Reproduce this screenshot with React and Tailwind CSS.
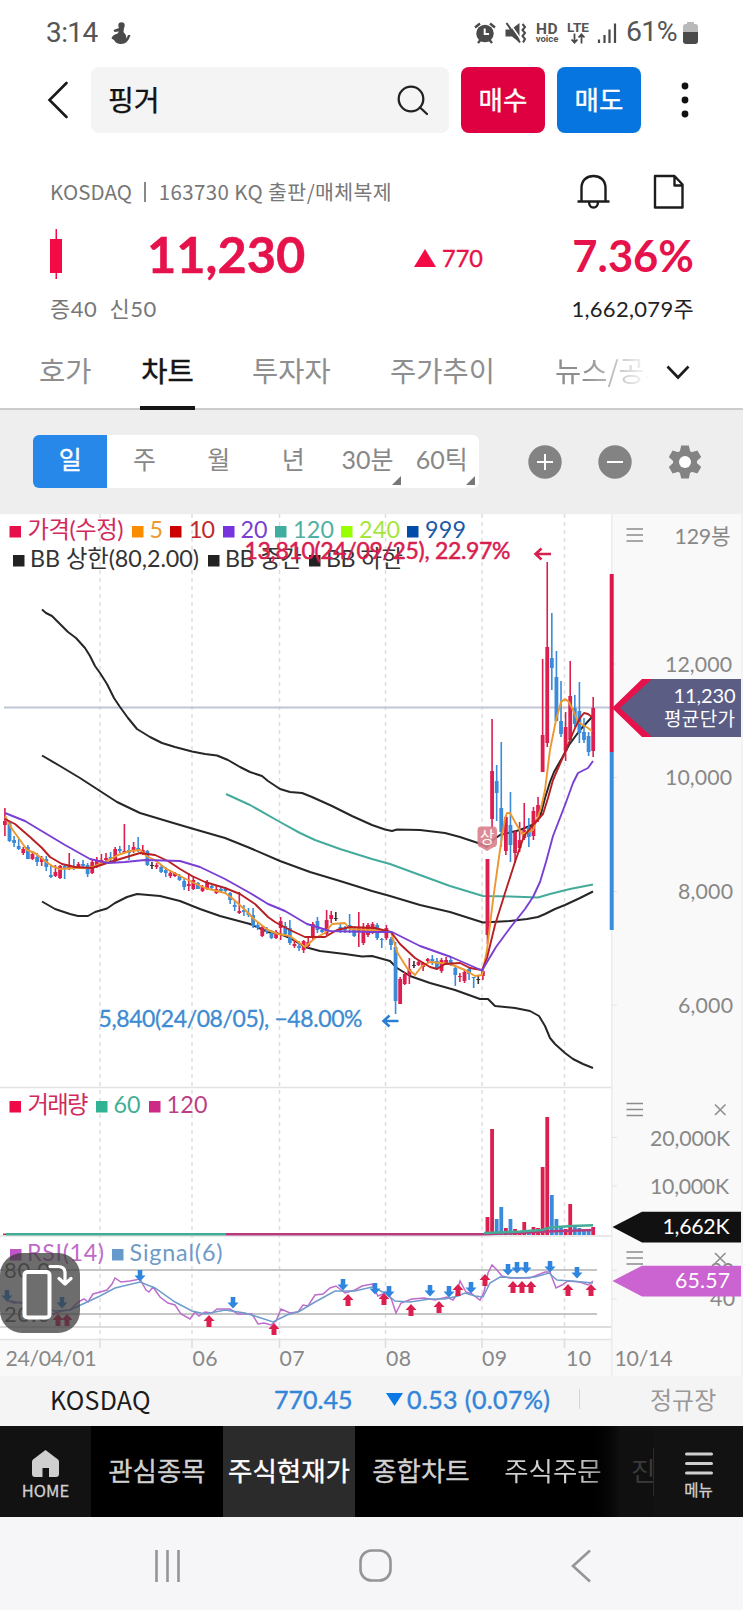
import { clsx } from 'clsx';

const KR = '"Noto Sans CJK KR", sans-serif';
const NUM = 'Lato, "Noto Sans CJK KR", sans-serif';

const RED = '#dc1f4f';
const BLUE = '#3b8bd8';

/* ---------- chart data (plot pixels, y measured from the page top) ---------- */

const barX = (i) => 4.9 + 4.596 * i;

// [high, low, bodyTop, bodyBottom, colour]
const CANDLES = [
  [808, 836, 821, 825, 'r'], [822, 842, 823, 841, 'b'], [836, 847, 840, 843, 'b'], [839, 850, 846, 849, 'b'],
  [847, 855, 849, 853, 'r'], [845, 859, 847, 859, 'b'], [851, 860, 854, 859, 'r'], [853, 866, 857, 862, 'b'],
  [856, 866, 858, 862, 'r'], [856, 871, 859, 867, 'b'], [865, 878, 875, 877, 'b'], [865, 877, 872, 876, 'r'],
  [865, 879, 866, 878, 'r'], [865, 879, 866, 868, 'b'], [853, 870, 866, 869, 'r'], [859, 870, 866, 869, 'b'],
  [862, 869, 864, 868, 'r'], [860, 868, 864, 866, 'b'], [863, 877, 865, 874, 'b'], [860, 874, 862, 873, 'r'],
  [857, 868, 861, 866, 'r'], [854, 865, 860, 863, 'r'], [853, 862, 858, 860, 'r'], [852, 862, 857, 859, 'b'],
  [847, 862, 849, 861, 'r'], [846, 853, 849, 851, 'b'], [824, 853, 851, 853, 'r'], [845, 860, 850, 853, 'b'],
  [842, 853, 847, 851, 'r'], [837, 852, 848, 851, 'b'], [845, 855, 850, 853, 'r'], [850, 866, 851, 865, 'b'],
  [862, 869, 865, 866, 'k'], [863, 869, 865, 867, 'r'], [865, 873, 867, 872, 'b'], [867, 877, 870, 873, 'b'],
  [870, 878, 873, 876, 'r'], [872, 877, 873, 876, 'r'], [874, 881, 876, 880, 'b'], [878, 890, 881, 887, 'b'],
  [873, 891, 884, 886, 'r'], [877, 890, 880, 889, 'r'], [882, 889, 883, 889, 'b'], [885, 892, 887, 891, 'r'],
  [880, 890, 883, 889, 'r'], [885, 890, 886, 888, 'b'], [886, 894, 889, 893, 'r'], [887, 892, 889, 891, 'b'],
  [887, 893, 889, 891, 'b'], [892, 904, 893, 900, 'b'], [900, 911, 905, 907, 'b'], [892, 914, 911, 913, 'r'],
  [905, 916, 910, 912, 'b'], [908, 917, 913, 915, 'b'], [908, 928, 915, 926, 'b'], [923, 930, 925, 928, 'b'],
  [926, 937, 927, 936, 'r'], [927, 934, 929, 932, 'b'], [930, 939, 933, 938, 'b'], [930, 939, 932, 938, 'r'],
  [917, 940, 921, 928, 'r'], [922, 935, 926, 934, 'b'], [920, 945, 928, 943, 'b'], [940, 948, 944, 946, 'r'],
  [941, 951, 946, 948, 'b'], [940, 953, 941, 950, 'r'], [937, 948, 942, 946, 'r'], [922, 940, 924, 937, 'r'],
  [917, 933, 921, 930, 'b'], [928, 933, 930, 932, 'b'], [910, 935, 920, 934, 'r'], [911, 923, 915, 919, 'r'],
  [912, 921, 918, 919, 'k'], [923, 933, 927, 929, 'b'], [926, 933, 928, 930, 'b'], [914, 933, 925, 927, 'b'],
  [928, 937, 929, 936, 'b'], [912, 947, 927, 932, 'r'], [923, 945, 928, 943, 'r'], [923, 937, 925, 935, 'r'],
  [922, 934, 924, 931, 'r'], [923, 940, 925, 938, 'b'], [938, 948, 939, 940, 'b'], [925, 940, 928, 938, 'r'],
  [937, 950, 939, 945, 'b'], [942, 1014, 947, 1001, 'b'], [977, 1004, 979, 1004, 'r'], [972, 985, 974, 984, 'r'],
  [958, 984, 969, 975, 'r'], [961, 968, 965, 966, 'k'], [960, 966, 962, 965, 'r'], [962, 971, 963, 967, 'r'],
  [958, 963, 959, 961, 'r'], [955, 965, 959, 962, 'b'], [958, 970, 961, 969, 'b'], [958, 973, 960, 971, 'r'],
  [957, 965, 960, 963, 'r'], [957, 966, 960, 964, 'b'], [965, 986, 968, 975, 'b'], [973, 982, 976, 977, 'r'],
  [970, 983, 972, 981, 'r'], [967, 980, 969, 974, 'b'], [977, 988, 977, 978, 'b'], [976, 984, 979, 980, 'k'],
  [970, 980, 971, 976, 'r'], [859, 944, 859, 935, 'r'], [719, 828, 771, 819, 'r'], [765, 821, 781, 793, 'b'],
  [742, 847, 808, 832, 'b'], [815, 855, 817, 851, 'r'], [792, 862, 825, 845, 'b'], [830, 863, 832, 853, 'r'],
  [822, 852, 840, 848, 'r'], [803, 840, 830, 838, 'r'], [818, 847, 827, 837, 'b'], [807, 840, 811, 836, 'r'],
  [797, 822, 805, 817, 'r'], [659, 772, 735, 772, 'r'], [562, 747, 647, 743, 'r'], [613, 690, 658, 668, 'b'],
  [651, 721, 677, 721, 'b'], [681, 737, 721, 734, 'b'], [712, 761, 727, 751, 'r'], [661, 740, 696, 740, 'r'],
  [695, 727, 708, 724, 'b'], [682, 743, 711, 733, 'b'], [718, 743, 732, 740, 'b'], [732, 756, 736, 752, 'b'],
  [697, 757, 708, 751, 'r'],
];

// top of the volume bars, starting with bar 105
const VOLUMES = [
  1217, 1129, 1219, 1207, 1228, 1219, 1229, 1231, 1222, 1230, 1227, 1228,
  1167, 1117, 1195, 1219, 1226, 1229, 1204, 1227, 1228, 1231, 1231, 1227,
];

const LINES = {
  bbUpper: '42,609.5 46,613 52,616 60,624 68,632 76,638 85,648 90,656 95,666 100,673 107,684 114,698 120,707 128,718 137,729 150,737 162,743 175,747 192,751.5 205,754 217,755.5 228,760 240,767 250,772 262,776 268,781 280,789 290,792 302,793 312,797 332,806 352,816 372,825 385,829.5 392,831 397,829.5 420,830 445,833 460,837 478,843 487,847 493,840 500,835 520,830 532,825 540,817 545,798 550,782 554,772 562,758 569,745 580,730 592,717',
  bbMid: '42,755.5 60,766 80,778 100,791 117,802 140,813 170,822 192,828.5 225,838 250,848 280,861 310,872 340,881 372,891 390,896 420,905 450,912 483,922.5 510,921 527,919 538,917 545,914 555,909 565,905 580,898 593,891.5',
  bbLower: '42,901.5 55,909 70,914 78,916 88,916 95,912 107,908.5 115,903 127,897 137,894 160,896 180,901 200,909 220,916 250,924 268,932 280,934 290,938 305,947 320,951 345,954 362,956.5 372,956 390,961 397,968 410,976 430,983 455,990 480,999 488,999 495,1006 515,1008 530,1011 539,1016 545,1026 550,1038 555,1044 565,1053 573,1059 583,1064 593,1068',
  ma120: '226,794 250,805 280,822 300,833 315,840 340,849 372,859 390,864 420,875 450,886 483,896 510,896.5 538,897.5 550,894 570,889 593,884.5',
  ma20: '5,813 25,821 45,833 65,845 90,859 108,863 125,862 145,860 180,861 200,867 225,879 250,893 268,904 285,911 307,924 330,931 372,932 392,932 420,946 451,957 482,970.5 496,947 510,928 525,909 533,897 540,882 546,862 553,836 565,805 573,783 578,773 588,768 593,761',
  ma10: '5,819 15,824 30,837 42,848 50,857 62,864 75,867 92,868 110,862 130,856 140,853 155,855 168,861 180,869 192,876 205,882 225,888 240,894 255,904 268,917 275,922 290,930 305,937 325,937 337,930 350,927 375,928 391,932 400,944 415,958 430,967 437,969 445,964 460,963 470,968 482,970 487,958 495,925 505,893 515,862 524,836 534,824 543,814 548,798 553,780 563,757 570,740 575,728 580,718 584,713 588,714 592,717',
  ma5: '5,816 12,829 20,840 27,850 35,853 45,861 52,866 60,869 75,868 90,868 105,862 118,855 130,851 140,850 148,857 155,860 165,868 180,876 192,882 205,888 225,893 232,898 243,908 255,920 268,930 278,934 290,936 305,947 315,938 325,933 332,924 345,923 350,929 372,930 391,932 397,952 407,968 415,975 422,966 430,962 450,964 465,970 475,976 482,975 487,950 493,900 500,850 505,818 507,813 510,813 515,822 522,834 533,830 541,808 545,790 550,750 556,720 561,702 565,699 569,702 573,710 578,722 588,728 592,731',
  rsi: '6,1300 14,1303 24,1302 34,1307 44,1312 50,1315 62,1311 70,1310 78,1302 84,1299 88,1302 93,1294 100,1292 107,1290 112,1284 115,1278 121,1282 130,1281 140,1279 146,1290 149,1292 153,1287 160,1297 168,1303 175,1305 181,1314 190,1319 195,1312 199,1316 205,1312 212,1313 217,1309 230,1309 238,1314 252,1314 258,1324 264,1323 271,1325 276,1321 281,1309 290,1313 298,1312 303,1305 308,1306 315,1295 323,1294 330,1288 336,1286 345,1293 355,1290 362,1286 372,1284 378,1296 388,1292 392,1301 396,1313 401,1303 412,1299 424,1298 435,1300 447,1297 453,1300 456,1296 460,1281 466,1292 472,1294 480,1300 484,1292 488,1273 492,1265 497,1270 502,1276 510,1278 530,1278 545,1272 550,1272 556,1288 562,1285 568,1281 580,1282 588,1285 593,1281',
  signal: '6,1300 30,1305 55,1311 70,1310 85,1303 100,1296 115,1288 140,1282 155,1288 175,1302 192,1311 205,1314 225,1310 245,1313 258,1317 273,1322 287,1315 300,1311 315,1302 335,1291 355,1291 372,1287 385,1293 395,1301 410,1302 430,1299 445,1299 458,1296 465,1293 475,1296 483,1297 490,1283 500,1277 520,1278 535,1277 549,1273 557,1280 572,1281 593,1283',
};

const DOWN_ARROWS = [
  [7, 1290], [62, 1297], [140, 1270], [233, 1297], [343, 1279], [375, 1283], [389, 1286], [430, 1285],
  [449, 1286], [471, 1282], [508, 1264], [517, 1262], [526, 1262], [550, 1261], [577, 1267],
];
const UP_ARROWS = [
  [58, 1314], [67, 1314], [209, 1315], [274, 1323], [348, 1294], [384, 1293], [411, 1304], [439, 1301],
  [458, 1284], [485, 1274], [513, 1281], [522, 1281], [531, 1281], [568, 1284], [591, 1284],
];

const LEGEND = [
  // square x, square y, square colour, text x, baseline, text width, text, text colour
  [9.5, 526, '#e8104a', 27.5, 538, 96, '가격(수정)', '#d02a5c'],
  [132, 526, '#fb8c00', 149.5, 538, 13, '5', '#eb9a2b'],
  [170, 526, '#cc0000', 189, 538, 26, '10', '#c02a2a'],
  [223, 526, '#7733dd', 240.5, 538, 27, '20', '#7b3fd0'],
  [275, 526, '#3fae9e', 293, 538, 41, '120', '#4fb0a2'],
  [341, 526, '#99ff00', 359, 538, 41, '240', '#a5e63a'],
  [407, 526, '#004ca8', 425, 538, 41, '999', '#2059a8'],
  [13, 555, '#222222', 30, 567, 169, 'BB 상한(80,2.00)', '#333333'],
  [208, 555, '#222222', 225, 567, 77, 'BB 중간', '#333333'],
  [309, 555, '#222222', 326, 567, 77, 'BB 하한', '#333333'],
  [9.5, 1101, '#f00a45', 27.5, 1112.5, 61, '거래량', '#d02a5c'],
  [96, 1101, '#2fb394', 113.5, 1112.5, 27, '60', '#3fb094'],
  [149, 1101, '#cc2a85', 166.5, 1112.5, 41, '120', '#bd3f87'],
  [10, 1249, '#bf55c8', 27, 1261, 77, 'RSI(14)', '#c06ac8'],
  [112, 1249, '#6699cc', 129.5, 1261, 93, 'Signal(6)', '#6d9ac6'],
];

const candleColor = { r: RED, b: BLUE, k: '#333333' };

function Label({ x, y, w, size = 21.3, color = '#888888', children, ...rest }) {
  return (
    <text x={x} y={y} textLength={w} fontSize={size} fill={color} style={{ fontFamily: NUM }} {...rest}>
      {children}
    </text>
  );
}

function PaneMenu({ y, close }) {
  return (
    <g stroke="#8c8c8c" strokeWidth="1.500">
      <path d={`M626.5 ${y - 6}H643M626.5 ${y}H643M626.5 ${y + 6}H643`} />
      {close && <path d={`M715 ${y - 5}L725.5 ${y + 5.5}M725.5 ${y - 5}L715 ${y + 5.5}`} />}
    </g>
  );
}

function StockChart() {
  return (
    <svg className="block w-full h-[862px]" viewBox="0 514 743 862" fill="none">
      <rect x="0" y="514" width="743" height="862" fill="#f9f9f9" />
      <rect x="0" y="514.500" width="611.500" height="825" fill="#ffffff" />
      <rect x="611" y="514" width="1.500" height="862" fill="#ececec" />
      <rect x="741" y="514" width="2" height="862" fill="#f2f2f2" />

      {/* month grid */}
      {[100, 192, 279.5, 385.5, 482, 564.5].map((x) => (
        <g key={x}>
          <path d={`M${x} 514V1340`} stroke="#dedede" strokeWidth="1.500" strokeDasharray="4 4" />
          <path d={`M${x} 1340V1348`} stroke="#dddddd" strokeWidth="1.500" />
        </g>
      ))}
      <path d="M0 1087.500H611M0 1236H611M0 1339.500H611" stroke="#e2e2e2" strokeWidth="1.500" />
      <path d="M0 1327H611" stroke="#d2d2d2" strokeWidth="1.500" />
      <path d="M0 1270H597M0 1314H597" stroke="#b4b4b4" strokeWidth="1.500" />
      <path d="M612 664H617M612 777.500H617M612 891.500H617M612 1005H617M612 1137.500H617M612 1186H617M612 1270H617M612 1299H617" stroke="#e4e4e4" />

      {/* legends */}
      {LEGEND.map(([sx, sy, sc, tx, ty, w, text, tc]) => (
        <g key={`${sx}-${sy}`}>
          <rect x={sx} y={sy} width="11.500" height="11.500" fill={sc} />
          <Label x={tx} y={ty} w={w} size={23.3} color={tc}>{text}</Label>
        </g>
      ))}

      <path d="M4 707.500H611" stroke="#c2c5d6" strokeWidth="2" />

      {/* price pane */}
      <g strokeWidth="2" strokeLinejoin="round">
        <polyline points={LINES.bbUpper} stroke="#262626" />
        <polyline points={LINES.bbMid} stroke="#262626" />
        <polyline points={LINES.bbLower} stroke="#262626" />
        <polyline points={LINES.ma120} stroke="#44ab9c" />
      </g>
      {CANDLES.map(([high, low, top, bottom, c], i) => (
        <g key={i} fill={candleColor[c]}>
          <rect x={barX(i) - 0.8} y={high} width="1.600" height={low - high} />
          <rect x={barX(i) - 1.9} y={top} width="3.800" height={bottom - top} />
        </g>
      ))}
      <g strokeWidth="1.900" strokeLinejoin="round">
        <polyline points={LINES.ma5} stroke="#ec9830" />
        <polyline points={LINES.ma10} stroke="#b81f22" />
        <polyline points={LINES.ma20} stroke="#7a3fd2" />
      </g>
      <path d="M481 826.500H493Q497 826.500 497 830.500V843Q497 847 493 847.500L487 851L481 847.500Q477.500 847 477.500 843V830.500Q477.500 826.500 481 826.500Z" fill="#d9808a" fillOpacity="0.900" />
      <Label x={480} y={842.5} w={14.5} size={15.5} color="#ffffff">상</Label>

      <Label x={244.5} y={559} w={266} size={23} color="#d8204f" stroke="#d8204f" strokeWidth="0.500">
        13,810(24/09/25), 22.97%
      </Label>
      <path d="M551 554H536M541.500 548.500L535.500 554L541.500 559.500" stroke="#d8204f" strokeWidth="2.600" />
      <Label x={98.5} y={1026.5} w={264} size={23} color="#3d8bd2" stroke="#3d8bd2" strokeWidth="0.300">
        5,840(24/08/05), −48.00%
      </Label>
      <path d="M398.500 1021H384M389.500 1015.500L383.500 1021L389.500 1026.500" stroke="#2a7fd4" strokeWidth="2.600" />

      {/* volume pane */}
      {VOLUMES.map((top, n) => (
        <rect key={n} x={barX(105 + n) - 1.9} y={top} width="3.800" height={1235 - top} fill={candleColor[CANDLES[105 + n][4]]} />
      ))}
      <path d="M3 1234.300H7" stroke="#b02a55" strokeWidth="1.500" />
      <path d="M6 1234.200H226" stroke="#44ab96" strokeWidth="2.500" />
      <path d="M226 1234.200H484L520 1233L545 1231.500L593 1230" stroke="#b93a7c" strokeWidth="2.500" />
      <path d="M484 1233L520 1231.500L542 1230L550 1227.500L572 1226L593 1225.300" stroke="#44ab96" strokeWidth="2.500" />

      {/* rsi pane */}
      <polyline points={LINES.rsi} stroke="#bd6ccb" strokeWidth="1.500" />
      <polyline points={LINES.signal} stroke="#6f9ccc" strokeWidth="1.500" />
      {DOWN_ARROWS.map(([x, y]) => (
        <path key={`d${x}`} d={`M${x - 2.3} ${y}h4.600v5.500h3.200l-5.500 6l-5.500 -6h3.200z`} fill="#2f86e0" />
      ))}
      {UP_ARROWS.map(([x, y]) => (
        <path key={`u${x}`} d={`M${x - 2.5} ${y + 12}h5v-6h3l-5.500 -6l-5.500 6h3z`} fill={RED} />
      ))}
      <Label x={4} y={1278} w={46} size={22} color="#666666">80.0</Label>
      <Label x={4} y={1321.5} w={46} size={22} color="#666666">20.0</Label>

      {/* value axis */}
      <Label x={674.5} y={543.5} w={56}>129봉</Label>
      <Label x={665} y={671.5} w={67}>12,000</Label>
      <Label x={665} y={785} w={67}>10,000</Label>
      <Label x={678} y={899} w={55}>8,000</Label>
      <Label x={678} y={1012.5} w={55}>6,000</Label>
      <Label x={650} y={1145.5} w={80}>20,000K</Label>
      <Label x={650} y={1194} w={79}>10,000K</Label>
      <Label x={710} y={1278} w={24}>80</Label>
      <Label x={710} y={1306} w={25}>40</Label>
      <PaneMenu y={535} />
      <PaneMenu y={1109.5} close />
      <PaneMenu y={1258} close />

      <rect x="609.700" y="574" width="4" height="178" fill="#e0154b" />
      <rect x="609.700" y="752" width="4" height="178" fill="#3a8ee0" />
      <path d="M612 708L642 679H653V737H642Z" fill="#e6124b" />
      <path d="M620 708L652 679H741V737H652Z" fill="#5b5d85" />
      <Label x={673.5} y={702.5} w={62} size={20} color="#ffffff">11,230</Label>
      <Label x={664} y={725.5} w={71} size={19} color="#ffffff">평균단가</Label>

      <path d="M612.500 1227L642 1211.700H741V1242.500H642Z" fill="#111111" />
      <Label x={662.5} y={1234} w={67} size={21.3} color="#ffffff">1,662K</Label>
      <path d="M612.500 1281L642 1265.700H741V1296.500H642Z" fill="#cb63d1" />
      <Label x={675} y={1288} w={55} size={21.3} color="#ffffff">65.57</Label>

      {/* date axis */}
      <Label x={5.5} y={1365.5} w={91}>24/04/01</Label>
      <Label x={192.5} y={1365.5} w={25}>06</Label>
      <Label x={279.5} y={1365.5} w={25}>07</Label>
      <Label x={386} y={1365.5} w={25}>08</Label>
      <Label x={482} y={1365.5} w={25}>09</Label>
      <Label x={566} y={1365.5} w={25}>10</Label>
      <Label x={614.5} y={1365.5} w={58}>10/14</Label>
    </svg>
  );
}

function RotateButton() {
  return (
    <button type="button" className="absolute left-0 top-[739px] size-20 rounded-[22px] bg-[#3c3c3c]/75">
      <svg className="block" width="80" height="80" viewBox="0 0 80 80" fill="none" stroke="#ffffff" strokeWidth="3.200" strokeLinecap="round" strokeLinejoin="round">
        <rect x="24.500" y="19" width="25" height="45.500" rx="3" fill="#6e6e6e" strokeWidth="4" />
        <path d="M50 13.500H58Q65 13.500 65 20V29M59 25.500L65 31L71 25.500" />
      </svg>
    </button>
  );
}

function StatusBar() {
  return (
    <div className="flex h-[67px] items-center justify-between pl-[46px] pr-[45px] pb-[2px] text-[#555555] [font-family:Roboto,sans-serif]">
      <div className="flex items-center">
        <span className="w-[51px] text-[28px] leading-none whitespace-nowrap tracking-[-0.6px]">3:14</span>
        <svg className="ml-[14px]" width="20" height="22" viewBox="0 0 20 22" fill="#4a4a4a">
          <circle cx="10.500" cy="3.500" r="3.200" />
          <path d="M8 6L2.500 8L3.500 10L8 9.500L6.500 11.500Q1 13 0.500 16.500L3 18Q5 22 10 22Q17 22 19.500 13L17 13L15.500 16.500Q15 12 12.500 10L13 6Z" />
        </svg>
      </div>
      <div className="flex items-center">
        <svg width="22" height="22" viewBox="0 0 22 22" fill="#4a4a4a">
          <circle cx="11" cy="11.500" r="8.700" />
          <path d="M1 5.500L6 1.500M21 5.500L16 1.500M4 21L6.500 18M18 21L15.500 18" stroke="#4a4a4a" strokeWidth="2.400" />
          <path d="M10.700 6.500V12H15" stroke="#ffffff" strokeWidth="2" fill="none" />
        </svg>
        <svg className="ml-[9px]" width="22" height="22" viewBox="0 0 22 22" fill="#4a4a4a">
          <path d="M0.500 7.500H6L14.500 1V20.500L7 14.500H0.500Z" />
          <path d="M4 0.500L17 19" stroke="#ffffff" strokeWidth="1.600" />
          <path d="M1.500 1L15 20.500" stroke="#4a4a4a" strokeWidth="2" />
          <path d="M17.500 2L20 5L17.500 8L20 11L17.500 14L20 17L18 20.500" stroke="#4a4a4a" strokeWidth="2" fill="none" />
        </svg>
        <div className="ml-[8px] flex w-6 flex-col items-center font-bold">
          <span className="text-[15.500px] leading-[12px] tracking-[0.5px]">HD</span>
          <span className="text-[9.500px] leading-[8px]">voice</span>
        </div>
        <div className="ml-[7px] flex w-6 flex-col items-center">
          <span className="text-[13.500px] font-bold leading-[11px]">LTE</span>
          <svg width="16" height="11" viewBox="0 0 16 11" fill="none" stroke="#4a4a4a" strokeWidth="1.800">
            <path d="M4.500 0.500V9.500M1.500 6.500L4.500 9.700L7.500 6.500M11.500 10.500V1.500M8.500 4.500L11.500 1.300L14.500 4.500" />
          </svg>
        </div>
        <svg className="ml-[7px]" width="20" height="20" viewBox="0 0 20 20" stroke="#4a4a4a" strokeWidth="2.200">
          <path d="M2 20V16.500M7.500 20V12M12.500 20V6.500M18 20V0.500" />
        </svg>
        <span className="ml-[9px] w-[54px] text-[28.500px] leading-none tracking-[-0.7px]">61%</span>
        <svg className="ml-[3px]" width="15" height="22" viewBox="0 0 15 22">
          <path d="M4 0H11V2H12.500Q15 2 15 5V11H0V5Q0 2 2.500 2H4Z" fill="#b9b9b9" />
          <path d="M0 10H15V19Q15 22 12 22H3Q0 22 0 19Z" fill="#4a4a4a" />
        </svg>
      </div>
    </div>
  );
}

function SearchRow() {
  return (
    <div className="flex h-[66px] items-center pl-[47px]">
      <svg className="shrink-0" width="22" height="38" viewBox="0 0 22 38" fill="none" stroke="#1a1a1a" strokeWidth="2.600" strokeLinecap="round">
        <path d="M19.500 2L2.500 19L19.500 36" />
      </svg>
      <div className="ml-[22px] flex h-full w-[358px] shrink-0 items-center justify-between rounded-lg bg-[#f4f4f4] pl-[17px] pr-[20px]">
        <span className="pb-[2px] text-[28px] leading-none text-[#111111] [-webkit-text-stroke:0.4px]">핑거</span>
        <svg width="33" height="31" viewBox="0 0 33 31" fill="none" stroke="#222222" strokeWidth="2.300" strokeLinecap="round">
          <circle cx="15" cy="14" r="12.300" />
          <path d="M24 22.500L31 29" />
        </svg>
      </div>
      <button type="button" className="ml-3 h-full w-[84px] rounded-lg bg-[#de0040] pb-[3px] text-[26.500px] text-white [-webkit-text-stroke:0.4px]">매수</button>
      <button type="button" className="ml-3 h-full w-[84px] rounded-lg bg-[#0675e0] pb-[3px] text-[26.500px] text-white [-webkit-text-stroke:0.4px]">매도</button>
      <svg className="ml-[40px]" width="8" height="36" viewBox="0 0 8 36" fill="#111111">
        <circle cx="4" cy="4" r="3.400" />
        <circle cx="4" cy="18" r="3.400" />
        <circle cx="4" cy="32" r="3.400" />
      </svg>
    </div>
  );
}

function Quote() {
  return (
    <div className="flex h-[197px] flex-col pl-[50px] pr-[50px] pt-[39px]">
      <div className="flex h-[40px] items-center">
        <p className="flex flex-1 items-center text-[20.500px] leading-none whitespace-nowrap text-[#777777]">
          <span className="tracking-[0.1px]">KOSDAQ</span>
          <i className="ml-[12px] mr-[13px] h-[20px] w-[1.500px] bg-[#888888]" />
          <span className="tracking-[0.4px]">163730 KQ 출판/매체복제</span>
        </p>
        <svg width="33" height="36" viewBox="0 0 33 36" fill="none" stroke="#1c1c1c" strokeWidth="2.400">
          <path d="M4.500 27V14C4.500 6 10 2 16.500 2S28.500 6 28.500 14V27M0.500 27.500H32.500M12 28.500Q12.500 33.500 16.500 33.500T21 28.500" />
        </svg>
        <svg className="ml-[43px] mr-[9px]" width="31" height="36" viewBox="0 0 31 36" fill="none" stroke="#1c1c1c" strokeWidth="2.400" strokeLinejoin="round">
          <path d="M2 2H21.500L29.500 10.500V33.500H2ZM21.500 2V11.500H29.500" />
        </svg>
      </div>
      <div className="mt-[18px] flex h-[50px] items-center text-[#e6124b] [font-family:Lato,sans-serif]">
        <svg width="12" height="50" viewBox="0 0 12 50" fill="#f40a45">
          <path d="M5.500 0H7V10H12V44H7V50H5.500V44H0V10H5.500Z" />
        </svg>
        <span className="ml-[85px] w-[161px] text-[50.500px] font-bold leading-none [-webkit-text-stroke:0.5px]">11,230</span>
        <svg className="ml-[106px] mt-2" width="22" height="18" viewBox="0 0 22 18" fill="#f40a45"><path d="M11 0L22 18H0Z" /></svg>
        <span className="ml-[6px] mt-[10px] text-[23.500px] leading-none [-webkit-text-stroke:0.4px]">770</span>
        <span className="ml-auto mt-1 -mr-px text-[43.500px] font-bold leading-none">7.36%</span>
      </div>
      <div className="mt-2 flex h-[44px] items-center justify-between text-[22px] leading-none [font-family:Lato,'Noto_Sans_CJK_KR',sans-serif]">
        <span className="text-[#777777] whitespace-pre tracking-[0.5px]">증40{'  '}신50</span>
        <span className="-mr-px text-[#222222] tracking-[0.3px]">1,662,079주</span>
      </div>
    </div>
  );
}

function Tabs() {
  return (
    <div className="flex h-[80px] border-b-2 border-[#cccccc] pl-[39px] text-[28.500px] text-[#8e8e8e]">
      <span className="w-[54px] pt-[18px] whitespace-nowrap leading-[44px]">호가</span>
      <span className="ml-[47px] h-[80px] w-[55px] border-b-4 border-[#151515] pt-[18px] text-center whitespace-nowrap leading-[44px] text-[#151515] [-webkit-text-stroke:0.5px]">차트</span>
      <span className="ml-[57px] w-[82px] pt-[18px] whitespace-nowrap leading-[44px]">투자자</span>
      <span className="ml-[56px] w-[108px] pt-[18px] whitespace-nowrap leading-[44px]">주가추이</span>
      <span className="ml-[57px] w-[96px] overflow-hidden pt-[18px] whitespace-nowrap leading-[44px] [mask-image:linear-gradient(to_right,black_30%,transparent_100%)]">뉴스/공시</span>
      <svg className="ml-[15px] mt-[35px]" width="24" height="15" viewBox="0 0 24 15" fill="none" stroke="#1c1c1c" strokeWidth="2.600">
        <path d="M1.500 1.500L12 12.500L22.500 1.500" />
      </svg>
    </div>
  );
}

const PERIODS = [
  { label: '일', active: true },
  { label: '주' },
  { label: '월' },
  { label: '년' },
  { label: '30분', more: true },
  { label: '60틱', more: true },
];

function Toolbar() {
  return (
    <div className="flex h-[104px] items-center bg-[#eeeeee] pl-[33px] pb-px">
      <div className="flex h-[53px] w-[446px] overflow-hidden rounded-md bg-white [font-family:Lato,'Noto_Sans_CJK_KR',sans-serif]">
        {PERIODS.map((p) => (
          <button
            key={p.label}
            type="button"
            className={clsx(
              'relative flex-1 pb-[3px] text-[25px] whitespace-nowrap',
              p.active ? 'bg-[#2788ea] text-white [-webkit-text-stroke:0.4px]' : 'text-[#888888]'
            )}
          >
            {p.label}
            {p.more && <i className="absolute right-1 bottom-[3px] border-b-[9px] border-l-[9px] border-b-[#777777] border-l-transparent" />}
          </button>
        ))}
      </div>
      <svg className="ml-[49px]" width="34" height="34" viewBox="0 0 34 34">
        <circle cx="17" cy="17" r="16.700" fill="#838383" />
        <path d="M9 17H25M17 9V25" stroke="#ffffff" strokeWidth="2" />
      </svg>
      <svg className="ml-[36px]" width="34" height="34" viewBox="0 0 34 34">
        <circle cx="17" cy="17" r="16.700" fill="#838383" />
        <path d="M9 17H25" stroke="#ffffff" strokeWidth="2" />
      </svg>
      <svg className="ml-[36px]" width="34" height="34" viewBox="-17 -17 34 34" fill="#838383">
        {[0, 60, 120].map((deg) => (
          <path key={deg} d="M-3.800 -16.500H3.800L5.500 -9V9L3.800 16.500H-3.800L-5.500 9V-9Z" transform={`rotate(${deg})`} />
        ))}
        <circle r="12" />
        <circle r="6" fill="#ffffff" />
      </svg>
    </div>
  );
}

function IndexStrip() {
  return (
    <div className="flex h-[50px] items-center bg-[#f4f4f5] pl-[50px] pb-[4px] text-[24px] leading-none">
      <span className="w-[224px] text-[25px] text-[#1c1c1c] tracking-[0.2px]">KOSDAQ</span>
      <span className="w-[112px] text-[25px] text-[#3385d8] [font-family:Lato,sans-serif] [-webkit-text-stroke:0.4px]">770.45</span>
      <svg width="17" height="13" viewBox="0 0 17 13" fill="#0a78e6"><path d="M0 0H17L8.500 13Z" /></svg>
      <span className="ml-[4px] w-[172px] whitespace-nowrap text-[25px] text-[#3385d8] [font-family:Lato,sans-serif] tracking-[0.4px] [-webkit-text-stroke:0.4px]">0.53 (0.07%)</span>
      <i className="h-5 w-px bg-[#d5d5d5]" />
      <span className="ml-[70px] whitespace-nowrap text-[#999999]">정규장</span>
    </div>
  );
}

function BottomNav() {
  return (
    <nav className="flex h-[91px] items-stretch overflow-hidden bg-black text-[#d0d0d0]">
      <div className="flex w-[91px] shrink-0 flex-col items-center bg-[#121212] pt-[24px]">
        <svg width="27" height="27" viewBox="0 0 27 27" fill="#cfcfcf">
          <path d="M13.500 0L26 9.500Q27 10.300 27 12V24Q27 27 24 27H17V18H10.500V27H3Q0 27 0 24V12Q0 10.300 1 9.500Z" />
        </svg>
        <span className="mt-[5px] text-[16.500px] leading-none [-webkit-text-stroke:0.3px]">HOME</span>
      </div>
      <span className="flex w-[132px] shrink-0 items-center justify-center pb-1 text-[26.500px] whitespace-nowrap [-webkit-text-stroke:0.3px]">관심종목</span>
      <span className="flex w-[132px] shrink-0 items-center justify-center bg-[#2b2b2b] pb-1 text-[26.500px] whitespace-nowrap text-white [-webkit-text-stroke:0.4px]">주식현재가</span>
      <span className="flex w-[132px] shrink-0 items-center justify-center pb-1 text-[26.500px] whitespace-nowrap [-webkit-text-stroke:0.3px]">종합차트</span>
      <span className="flex w-[132px] shrink-0 items-center justify-center bg-linear-to-r from-black from-70% to-[#0e0e0e] pb-1 text-[26.500px] whitespace-nowrap [-webkit-text-stroke:0.3px]">
        <span className="bg-linear-to-r from-[#d0d0d0] from-75% to-[#8a8a8a] bg-clip-text text-transparent [-webkit-text-stroke:0px]">주식주문</span>
      </span>
      <span className="flex w-[34px] shrink-0 items-center overflow-hidden bg-[#101010] pl-[12px] pb-1 text-[26.500px] text-[#3a3a3a]">진</span>
      <div className="flex flex-1 items-center bg-[#121212]">
        <i className="h-12 w-px bg-[#2c2c2c]" />
        <div className="flex flex-1 flex-col items-center pt-[7px]">
          <svg width="28" height="23" viewBox="0 0 28 23" stroke="#cfcfcf" strokeWidth="3" strokeLinecap="round">
            <path d="M1.500 2H26.500M1.500 11.500H26.500M1.500 21H26.500" />
          </svg>
          <span className="mt-[7px] text-[15.500px] leading-none [-webkit-text-stroke:0.3px]">메뉴</span>
        </div>
      </div>
    </nav>
  );
}

function SystemNav() {
  return (
    <div className="flex h-[93px] items-center bg-[#f6f6f8] pl-[154px] pt-[4px]">
      <svg width="27" height="32" viewBox="0 0 27 32" stroke="#959597" strokeWidth="2.600">
        <path d="M2.500 0V32M13.500 0V32M24.500 0V32" />
      </svg>
      <svg className="ml-[178px]" width="33" height="33" viewBox="0 0 33 33" fill="none" stroke="#959597" strokeWidth="2.600">
        <rect x="1.500" y="1.500" width="30" height="30" rx="11" />
      </svg>
      <svg className="ml-[178px]" width="22" height="34" viewBox="0 0 22 34" fill="none" stroke="#959597" strokeWidth="2.600">
        <path d="M20 1.500L3 17L20 32.500" />
      </svg>
    </div>
  );
}

export default function App() {
  return (
    <div className="flex h-[1610px] w-[743px] flex-col overflow-hidden bg-white" style={{ fontFamily: KR }}>
      <StatusBar />
      <SearchRow />
      <Quote />
      <Tabs />
      <Toolbar />
      <div className="relative">
        <StockChart />
        <RotateButton />
      </div>
      <IndexStrip />
      <BottomNav />
      <SystemNav />
    </div>
  );
}
